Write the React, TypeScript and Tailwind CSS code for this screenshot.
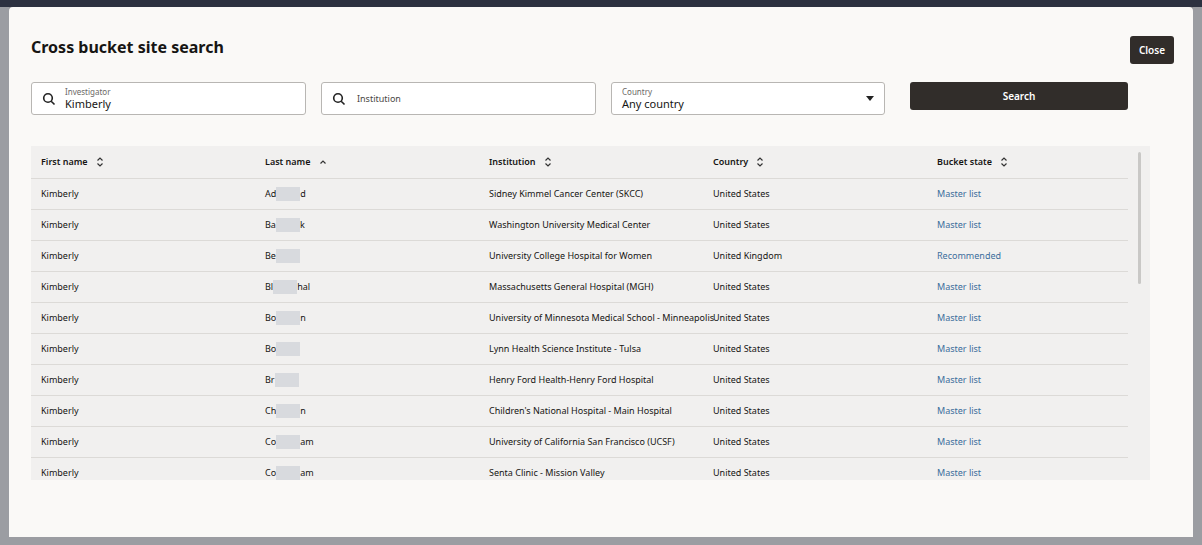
import React from "react";

const rows: [string, string, string, string, string][] = [
  ["Ad", "d", "Sidney Kimmel Cancer Center (SKCC)", "United States", "Master list"],
  ["Ba", "k", "Washington University Medical Center", "United States", "Master list"],
  ["Be", "", "University College Hospital for Women", "United Kingdom", "Recommended"],
  ["Bl", "hal", "Massachusetts General Hospital (MGH)", "United States", "Master list"],
  ["Bo", "n", "University of Minnesota Medical School - Minneapolis", "United States", "Master list"],
  ["Bo", "", "Lynn Health Science Institute - Tulsa", "United States", "Master list"],
  ["Br", "", "Henry Ford Health-Henry Ford Hospital", "United States", "Master list"],
  ["Ch", "n", "Children's National Hospital - Main Hospital", "United States", "Master list"],
  ["Co", "am", "University of California San Francisco (UCSF)", "United States", "Master list"],
  ["Co", "am", "Senta Clinic - Mission Valley", "United States", "Master list"],
];

const Sort = () => (
  <svg width="8" height="10" viewBox="0 0 8 10" className="ml-2 inline-block" fill="none" stroke="#333" strokeWidth="1.2">
    <path d="M1.5 3.5 L4 1 L6.5 3.5" />
    <path d="M1.5 6.5 L4 9 L6.5 6.5" />
  </svg>
);
const Up = () => (
  <svg width="8" height="6" viewBox="0 0 8 6" className="ml-2 inline-block" fill="none" stroke="#333" strokeWidth="1.2">
    <path d="M1.5 4.5 L4 2 L6.5 4.5" />
  </svg>
);
const SearchIcon = () => (
  <svg width="14" height="14" viewBox="0 0 14 14" fill="none" stroke="#222" strokeWidth="1.6">
    <circle cx="6" cy="6" r="4.3" />
    <path d="M9.2 9.2 L12.5 12.5" />
  </svg>
);

export default function App() {
  return (
    <div className="w-[1202px] h-[545px] bg-[#8d8f93] flex flex-col overflow-hidden" style={{ fontFamily: "'Noto Sans', 'Open Sans', sans-serif" }}>
      <div className="h-[7px] bg-[#2c3140]" />
      <div className="flex-1 flex">
        <div className="w-[9px] bg-[#9b9da2]" />
        <div className="flex-1 bg-[#faf9f7] rounded-t-[4px] pl-[22px] pr-[19px] pt-[28px] relative">
          <div className="flex justify-between items-start">
            <h1 className="text-[16px] font-bold text-[#161513]">Cross bucket site search</h1>
            <button className="mt-[1px] bg-[#312d2a] text-white text-[10px] font-semibold rounded-[3px] w-[44px] h-[28px]">Close</button>
          </div>
          <div className="flex gap-[15px] mt-[18px] items-start">
            <div className="w-[275px] h-[33px] bg-white border border-[#b8b6b3] rounded-[3px] flex items-center px-[10px] gap-[9px]">
              <SearchIcon />
              <div className="flex flex-col leading-none">
                <span className="text-[8px] text-[#6b6966]">Investigator</span>
                <span className="text-[11px] text-[#161513] mt-[2px]">Kimberly</span>
              </div>
            </div>
            <div className="w-[275px] h-[33px] bg-white border border-[#b8b6b3] rounded-[3px] flex items-center px-[10px] gap-[11px]">
              <SearchIcon />
              <span className="text-[9px] text-[#4a4845]">Institution</span>
            </div>
            <div className="w-[274px] h-[33px] bg-white border border-[#b8b6b3] rounded-[3px] flex items-center justify-between px-[10px]">
              <div className="flex flex-col leading-none">
                <span className="text-[8px] text-[#6b6966]">Country</span>
                <span className="text-[11px] text-[#161513] mt-[2px]">Any country</span>
              </div>
              <svg width="8" height="5" viewBox="0 0 8 5"><path d="M0 0 L8 0 L4 5Z" fill="#222" /></svg>
            </div>
            <button className="ml-[10px] w-[218px] h-[28px] bg-[#312d2a] text-white text-[10px] font-semibold rounded-[3px]">Search</button>
          </div>
          <div className="mt-[31px] flex h-[334px] w-[1119px] bg-[#f1f0ef] overflow-hidden">
            <div className="w-[1097px] text-[9px] text-[#161513]">
              <div className="grid grid-cols-[224px_224px_224px_224px_1fr] h-[33px] items-center border-b border-[#dcdad7] font-semibold">
                <div className="pl-[10px] flex items-center">First name<Sort /></div>
                <div className="pl-[10px] flex items-center">Last name<Up /></div>
                <div className="pl-[10px] flex items-center">Institution<Sort /></div>
                <div className="pl-[10px] flex items-center">Country<Sort /></div>
                <div className="pl-[10px] flex items-center">Bucket state<Sort /></div>
              </div>
              {rows.map((r, i) => (
                <div key={i} className="grid grid-cols-[224px_224px_224px_224px_1fr] h-[31px] items-center border-b border-[#dcdad7]">
                  <div className="pl-[10px]">Kimberly</div>
                  <div className="pl-[10px] flex items-center">
                    {r[0]}
                    <span className="inline-block w-[24px] h-[14px] bg-[#d8dade]" />
                    {r[1]}
                  </div>
                  <div className="pl-[10px] whitespace-nowrap">{r[2]}</div>
                  <div className="pl-[10px]">{r[3]}</div>
                  <div className="pl-[10px] text-[#3b6e9c]">{r[4]}</div>
                </div>
              ))}
            </div>
            <div className="flex-1 flex justify-center pt-[6px]">
              <div className="w-[3px] h-[132px] bg-[#c9c8c6] rounded" />
            </div>
          </div>
        </div>
        <div className="w-[9px] bg-[#9b9da2]" />
      </div>
      <div className="h-[8px] bg-[#9b9da2]" />
    </div>
  );
}
